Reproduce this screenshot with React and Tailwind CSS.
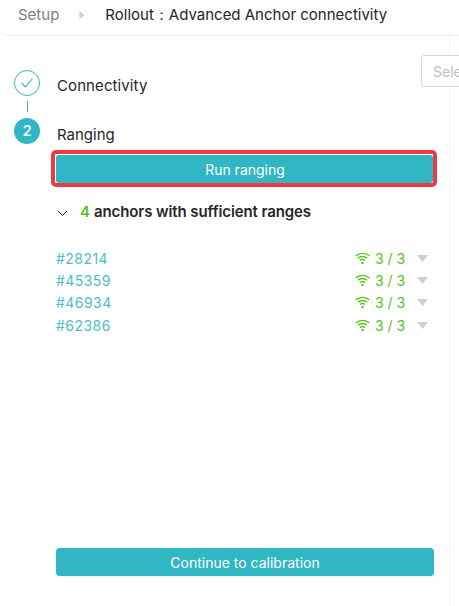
const anchors = ["#28214", "#45359", "#46934", "#62386"];

function Wifi() {
  return (
    <svg width="15" height="13" viewBox="0 0 15 13" fill="none" stroke="#52c41a" strokeWidth="1.3">
      <path d="M0.7 4 C4.5 0.4 10.5 0.4 14.3 4" />
      <path d="M2.9 6.3 C5.5 3.9 9.5 3.9 12.1 6.3" />
      <path d="M5 8.6 C6.4 7.4 8.6 7.4 10 8.6" />
      <circle cx="7.5" cy="11" r="1.2" fill="#52c41a" stroke="none" />
    </svg>
  );
}

export default function App() {
  return (
    <div className="relative w-[459px] h-[606px] overflow-hidden bg-white font-['Inter',sans-serif] text-[14px] text-[#262626]">
      <div className="flex items-center h-[36px] pb-[5px] pl-[18px] border-b border-[#f0f0f0] rounded-bl-lg">
        <span className="text-[15px] text-[#7f7f7f]">Setup</span>
        <svg className="ml-[20px] mr-[20px]" width="6" height="10" viewBox="0 0 6 10"><path d="M0.5 1 L5.5 5 L0.5 9 Z" fill="#cfcfcf" /></svg>
        <span className="text-[15px] font-normal whitespace-nowrap">Rollout：Advanced Anchor connectivity</span>
      </div>

      <div className="absolute left-[449px] top-[36px] bottom-0 w-px bg-[#f0f0f0]" />
      <div className="absolute left-[421px] top-[55px] w-[60px] h-[32px] border border-[#d9d9d9] rounded-[3px] pl-[11px] flex items-center text-[#bfbfbf] bg-white">Select</div>

      <div className="flex flex-col pl-[14px] pr-[25px] pt-[34px] h-[570px]">
        <div className="flex items-center h-[26px]">
          <div className="w-[26px] h-[26px] rounded-full border border-[#31b6c4] flex items-center justify-center">
            <svg width="14" height="12" viewBox="0 0 14 12" fill="none" stroke="#31b6c4" strokeWidth="1.1"><path d="M1.5 6 L5.5 10 L12.5 1.5" /></svg>
          </div>
          <span className="ml-[17px] text-[15px] tracking-[0.1px] pt-[7px]">Connectivity</span>
        </div>
        <div className="w-px h-[11px] bg-[#31b6c4] ml-[13px] mt-[5px] mb-[6px]" />
        <div className="flex items-center h-[26px]">
          <div className="w-[26px] h-[26px] rounded-full bg-[#31b6c4] text-white font-medium flex items-center justify-center text-[15px]">2</div>
          <span className="ml-[17px] text-[15px] pt-[9px]">Ranging</span>
        </div>

        <div className="ml-[36.5px] -mr-[2.5px] mt-[6px] h-[37px] rounded-[5px] border-[4px] border-[#ee3a43] bg-white">
          <div className="h-[28px] ml-[1px] mt-[1px] pl-[2px] rounded-[3px] bg-[#31b6c4] text-white flex items-center justify-center">Run ranging</div>
        </div>

        <div className="ml-[43px] mt-[15px] flex items-center h-[20px] font-semibold">
          <svg width="11" height="7" viewBox="0 0 11 7" fill="none" stroke="#262626" strokeWidth="1" className="mt-[3px]"><path d="M1 1 L5.5 5.5 L10 1" /></svg>
          <span className="ml-[12px] text-[15px] text-[#52c41a]">4</span>
          <span className="ml-[4px] text-[15px] tracking-[-0.1px]">anchors with sufficient ranges</span>
        </div>

        <div className="ml-[42px] mt-[25px] flex flex-col">
          {anchors.map((a) => (
            <div key={a} className="flex items-center h-[22.4px]">
              <span className="text-[#4fbdc9] tracking-[0.45px]">{a}</span>
              <span className="ml-auto"><Wifi /></span>
              <span className="ml-[5px] text-[#52c41a] w-[31px] whitespace-nowrap">3 / 3</span>
              <svg className="ml-[11px] mr-[6px]" width="11" height="7" viewBox="0 0 11 7"><path d="M0 0 H11 L5.5 7 Z" fill="#cfcfcf" /></svg>
            </div>
          ))}
        </div>

        <div className="mt-auto mb-[30px] ml-[42px] h-[28px] rounded-[4px] bg-[#31b6c4] text-white flex items-center justify-center shadow-[0_2px_0_rgba(0,0,0,0.04)]">Continue to calibration</div>
      </div>
    </div>
  );
}
